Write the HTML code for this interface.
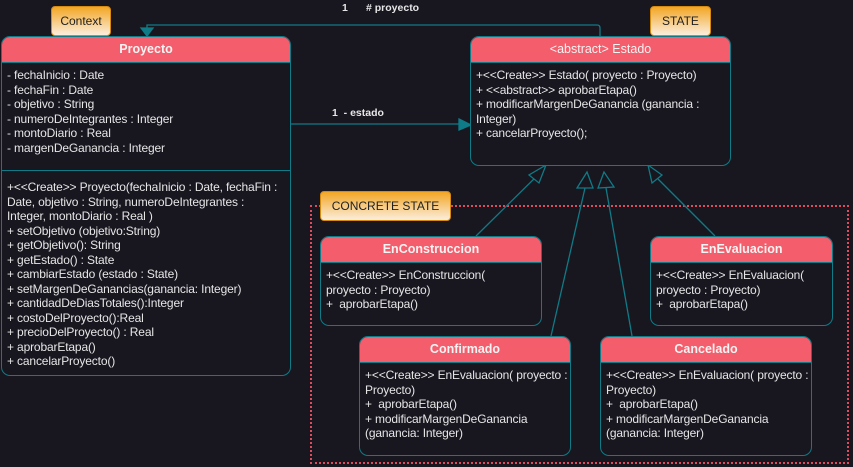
<!DOCTYPE html>
<html><head><meta charset="utf-8"><style>
body{margin:0;width:853px;height:467px;background:#18161f;font-family:"Liberation Sans",sans-serif;overflow:hidden;position:relative}
.b{position:absolute;border:1px solid #0f7b86;border-radius:9px;background:#18161f;box-sizing:border-box;color:#e6e6e6;font-size:12px;line-height:14.5px;letter-spacing:-0.15px}
.h{background:#f45d6b;border-radius:8px 8px 0 0;height:25px;border-bottom:1px solid #0f7b86;text-align:center;line-height:25px;color:#f4f4f4;font-size:12.5px;font-weight:bold;letter-spacing:0}
.c{padding:5px 0 5px 5px;white-space:nowrap}
.t{position:absolute;background:linear-gradient(#f2a624,#fbeede);border:1px solid #d68a10;border-radius:4px;box-sizing:border-box;color:#222;font-size:12px;text-align:center}
.l{position:absolute;color:#e6e6e6;font-size:10.5px;font-weight:bold}
</style></head><body>
<div style="position:absolute;left:310px;top:205px;width:539px;height:259px;border:2px dotted #e04a5a;box-sizing:border-box"></div>
<svg width="853" height="467" style="position:absolute;left:0;top:0" fill="none" stroke="#0f7b86" stroke-width="1.3">
<path d="M600 36V28Q600 25 597 25H147V34"/><path d="M141 28L147 36L153 28Z" fill="#0f7b86"/>
<path d="M290 124H465"/><path d="M459 119L471 125L459 130Z" fill="#0f7b86"/>
<path d="M476 236L541 172"/><path d="M546 165L529 175L539 183Z" fill="#18161f"/>
<path d="M551 336L585 188"/><path d="M587 172L577 188L593 188Z" fill="#18161f"/>
<path d="M632 336L606 188"/><path d="M604 172L598 188L614 187Z" fill="#18161f"/>
<path d="M715 236L658 179"/><path d="M648 165L652 183L662 175Z" fill="#18161f"/>
</svg>
<div class="l" style="left:342px;top:2px">1</div><div class="l" style="left:366px;top:2px"># proyecto</div>
<div class="l" style="left:332px;top:107px">1 &nbsp;- estado</div>
<div class="b" style="left:1px;top:36px;width:290px;height:340px"><div class="h">Proyecto</div>
<div class="c">- fechaInicio : Date<br>- fechaFin : Date<br>- objetivo : String<br>- numeroDeIntegrantes : Integer<br>- montoDiario : Real<br>- margenDeGanancia : Integer</div>
<div style="position:absolute;left:0;right:0;top:133px;border-top:1px solid #0f7b86"></div>
<div class="c" style="position:absolute;top:138px">+&lt;&lt;Create&gt;&gt; Proyecto(fechaInicio : Date, fechaFin :<br>Date, objetivo : String, numeroDeIntegrantes :<br>Integer, montoDiario : Real )<br>+ setObjetivo (objetivo:String)<br>+ getObjetivo(): String<br>+ getEstado() : State<br>+ cambiarEstado (estado : State)<br>+ setMargenDeGanancias(ganancia: Integer)<br>+ cantidadDeDiasTotales():Integer<br>+ costoDelProyecto():Real<br>+ precioDelProyecto() : Real<br>+ aprobarEtapa()<br>+ cancelarProyecto()</div></div>
<div class="b" style="left:470px;top:36px;width:261px;height:130px"><div class="h" style="font-weight:normal">&lt;abstract&gt; Estado</div>
<div class="c">+&lt;&lt;Create&gt;&gt; Estado( proyecto : Proyecto)<br>+ &lt;&lt;abstract&gt;&gt; aprobarEtapa()<br>+ modificarMargenDeGanancia (ganancia :<br>Integer)<br>+ cancelarProyecto();</div></div>
<div class="b" style="left:320px;top:236px;width:222px;height:90px"><div class="h">EnConstruccion</div>
<div class="c">+&lt;&lt;Create&gt;&gt; EnConstruccion(<br>proyecto : Proyecto)<br>+ &nbsp;aprobarEtapa()</div></div>
<div class="b" style="left:650px;top:236px;width:183px;height:90px"><div class="h">EnEvaluacion</div>
<div class="c">+&lt;&lt;Create&gt;&gt; EnEvaluacion(<br>proyecto : Proyecto)<br>+ &nbsp;aprobarEtapa()</div></div>
<div class="b" style="left:359px;top:336px;width:212px;height:120px"><div class="h">Confirmado</div>
<div class="c">+&lt;&lt;Create&gt;&gt; EnEvaluacion( proyecto :<br>Proyecto)<br>+ &nbsp;aprobarEtapa()<br>+ modificarMargenDeGanancia<br>(ganancia: Integer)</div></div>
<div class="b" style="left:600px;top:336px;width:212px;height:120px"><div class="h">Cancelado</div>
<div class="c">+&lt;&lt;Create&gt;&gt; EnEvaluacion( proyecto :<br>Proyecto)<br>+ &nbsp;aprobarEtapa()<br>+ modificarMargenDeGanancia<br>(ganancia: Integer)</div></div>
<div class="t" style="left:51px;top:6px;width:60px;height:30px;line-height:28px">Context</div>
<div class="t" style="left:650px;top:6px;width:61px;height:30px;line-height:28px">STATE</div>
<div class="t" style="left:320px;top:191px;width:131px;height:30px;line-height:28px">CONCRETE STATE</div>
</body></html>
